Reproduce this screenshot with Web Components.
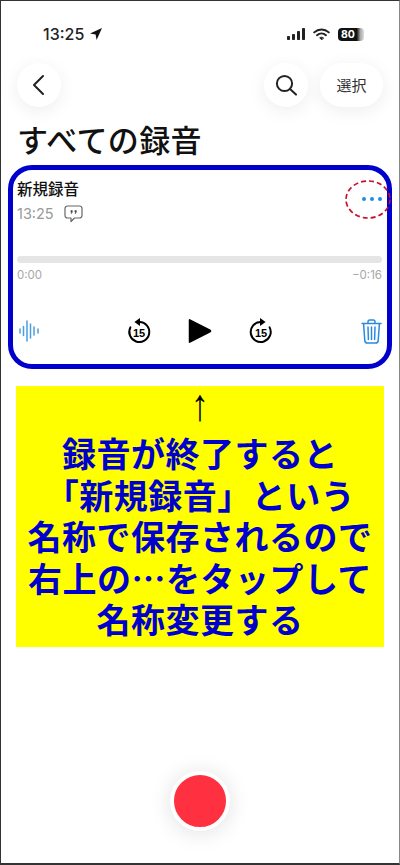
<!DOCTYPE html>
<html lang="ja">
<head>
<meta charset="utf-8">
<title>すべての録音</title>
<style>
    html, body { margin: 0; background: #fff; }
    body { font-family: "Inter", "Noto Sans CJK JP", sans-serif; }
</style>
</head>
<body>
<voice-screen>
    <status-bar slot="status"></status-bar>
    <nav-bar slot="nav"></nav-bar>
    <recording-card slot="card" name="新規録音" time="13:25" start="0:00" end="−0:16"></recording-card>
    <note-box slot="note">
        <div>録音が終了すると</div>
        <div>「新規録音」という</div>
        <div>名称で保存されるので</div>
        <div>右上の…をタップして</div>
        <div>名称変更する</div>
    </note-box>
    <record-button slot="record"></record-button>
</voice-screen>

<script>
const JP = '"Noto Sans CJK JP", sans-serif';

class VoiceScreen extends HTMLElement {
    constructor() {
        super();
        const shadow = this.attachShadow({ mode: 'open' });
        shadow.innerHTML = `
            <style>
                :host {
                    display: flex;
                    flex-direction: column;
                    box-sizing: border-box;
                    width: 400px;
                    height: 865px;
                    border: 1px solid #333;
                    border-bottom-width: 2px;
                    border-right-color: #888;
                    background: #fff;
                    overflow: hidden;
                }
                h1 {
                    margin: 12px 0 0 16px;
                    font: 500 31px/40px ${JP};
                    letter-spacing: .4px;
                    color: #111;
                }
                .card { display: block; margin: 6px 7px 0; }
                .note { display: block; margin: 17px 15px 0; }
                .record { display: flex; justify-content: center; margin-top: auto; padding-bottom: 32px; }
            </style>
            <slot name="status"></slot>
            <slot name="nav"></slot>
            <h1>すべての録音</h1>
            <div class="card"><slot name="card"></slot></div>
            <div class="note"><slot name="note"></slot></div>
            <div class="record"><slot name="record"></slot></div>
        `;
    }
}

class StatusBar extends HTMLElement {
    constructor() {
        super();
        const shadow = this.attachShadow({ mode: 'open' });
        shadow.innerHTML = `
            <style>
                :host {
                    display: flex;
                    align-items: center;
                    height: 20px;
                    padding: 23px 35px 0 42px;
                    font: 500 16px/20px "Inter", sans-serif;
                    color: #222;
                }
                .right { margin-left: auto; display: flex; align-items: center; gap: 8px; }
                svg { display: block; }
                .arrow { margin-left: 5px; }
                .batt {
                    width: 26px;
                    height: 13px;
                    border-radius: 4px;
                    background: linear-gradient(90deg, #111 0, #111 72%, #aaa 86%, #ddd 100%);
                    color: #fff;
                    font: 700 10.5px/13px "Inter", sans-serif;
                    text-align: left;
                    padding-left: 3px;
                    box-sizing: border-box;
                }
            </style>
            <span>13:25</span>
            <svg class="arrow" width="14" height="14" viewBox="0 0 14 14"><path d="M13 1 L1 6.6 L6.6 7.4 L7.6 13 Z" fill="#111"/></svg>
            <div class="right">
                <svg width="18" height="12" viewBox="0 0 18 12" fill="#222">
                    <rect x="0" y="8" width="3" height="4" rx=".8"/>
                    <rect x="5" y="6" width="3" height="6" rx=".8"/>
                    <rect x="10" y="3" width="3" height="9" rx=".8"/>
                    <rect x="15" y="0" width="3" height="12" rx=".8"/>
                </svg>
                <svg width="17" height="13" viewBox="0 0 17 13" fill="none" stroke="#222" stroke-width="1.9" stroke-linecap="round">
                    <path d="M1.2 4.4 C5.4 .6 11.6 .6 15.8 4.4"/>
                    <path d="M4 7.2 C6.6 5 10.4 5 13 7.2"/>
                    <path d="M8.5 11.6 L6.7 9.8 C7.8 9 9.2 9 10.3 9.8 Z" fill="#222" stroke-width="1"/>
                </svg>
                <div class="batt">80</div>
            </div>
        `;
    }
}

class RoundButton extends HTMLElement {
    constructor() {
        super();
        const shadow = this.attachShadow({ mode: 'open' });
        shadow.innerHTML = `
            <style>
                :host {
                    display: flex;
                    align-items: center;
                    justify-content: center;
                    box-sizing: border-box;
                    min-width: 44px;
                    height: 44px;
                    border-radius: 22px;
                    background: #fff;
                    box-shadow: 0 4px 18px rgba(0, 0, 0, .07);
                    font: 400 15px/20px ${JP};
                    color: #333;
                }
                :host([wide]) { width: 63px; }
            </style>
            <slot></slot>
        `;
    }
}

class NavBar extends HTMLElement {
    constructor() {
        super();
        const shadow = this.attachShadow({ mode: 'open' });
        shadow.innerHTML = `
            <style>
                :host {
                    display: flex;
                    align-items: center;
                    gap: 12px;
                    padding: 19px 16px 0 16px;
                }
                .back { margin-right: auto; }
                svg { display: block; }
            </style>
            <round-button class="back">
                <svg width="16" height="22" viewBox="0 0 16 22" fill="none" stroke="#222" stroke-width="2" stroke-linecap="round" stroke-linejoin="round"><path d="M12 2 L3 11 L12 20"/></svg>
            </round-button>
            <round-button>
                <svg width="24" height="24" viewBox="0 0 24 24" fill="none" stroke="#222" stroke-width="2" stroke-linecap="round"><circle cx="10.5" cy="10.5" r="7.6"/><path d="M16 16 L22 21.6"/></svg>
            </round-button>
            <round-button wide>選択</round-button>
        `;
    }
}

class SkipIcon extends HTMLElement {
    constructor() {
        super();
        const flip = this.hasAttribute('forward');
        const shadow = this.attachShadow({ mode: 'open' });
        shadow.innerHTML = `
            <style>
                :host { display: block; width: 24px; height: 26px; }
                svg { display: block; overflow: visible; }
                text { font: 700 11px "Liberation Sans", sans-serif; fill: #000; }
            </style>
            <svg width="24" height="26" viewBox="0 0 24 26" fill="none">
                <g transform="${flip ? 'translate(24 0) scale(-1 1)' : ''}">
                    <path d="M12.5 4 A10 10 0 1 1 3.4 9.4" stroke="#000" stroke-width="2" stroke-linecap="round"/>
                    <path d="M13 0 L7.4 4 L13 8 Z" fill="#000"/>
                </g>
                <text x="12" y="18.5" text-anchor="middle">15</text>
            </svg>
        `;
    }
}

class RecordingCard extends HTMLElement {
    constructor() {
        super();
        const shadow = this.attachShadow({ mode: 'open' });
        shadow.innerHTML = `
            <style>
                :host {
                    display: block;
                    position: relative;
                    box-sizing: border-box;
                    height: 204px;
                    border: 5px solid #0000cd;
                    border-radius: 24px;
                    padding: 8px 5px 0 4px;
                    background: #fff;
                }
                svg { display: block; }
                .name { font: 500 15.5px/20px ${JP}; color: #111; }
                .meta { display: flex; align-items: center; gap: 10px; height: 22px; margin-top: 5px; font: 400 14.5px/22px "Inter", sans-serif; color: #999; }
                .more { position: absolute; right: 5px; top: 27px; display: flex; gap: 4px; }
                .more i { width: 4px; height: 4px; border-radius: 50%; background: #1e8fe0; }
                .ring { position: absolute; right: -4px; top: 10px; }
                .track { height: 7px; border-radius: 4px; background: #e5e5e5; margin-top: 31px; }
                .times { display: flex; justify-content: space-between; margin-top: 5px; font: 400 11.5px/14px "Inter", sans-serif; color: #a8a8a8; }
                .controls { display: flex; align-items: center; justify-content: space-between; margin-top: 31px; height: 36px; }
                .mid { display: flex; align-items: center; gap: 37px; }
                .wave { margin-left: 2px; }
            </style>
            <div class="name">${this.getAttribute('name')}</div>
            <div class="meta">
                <span>${this.getAttribute('time')}</span>
                <svg width="19" height="18" viewBox="0 0 19 18" fill="none">
                    <path d="M3.5 1 H15.5 A2.5 2.5 0 0 1 18 3.5 V10.5 A2.5 2.5 0 0 1 15.5 13 H10.5 L7 16.5 V13 H3.5 A2.5 2.5 0 0 1 1 10.5 V3.5 A2.5 2.5 0 0 1 3.5 1 Z" stroke="#666" stroke-width="1.2" stroke-linejoin="round"/>
                    <path d="M6.6 5.2 h2 v2 l-1 1.5 h-.8 l.6 -1.5 h-.8 Z M10.6 5.2 h2 v2 l-1 1.5 h-.8 l.6 -1.5 h-.8 Z" fill="#444"/>
                </svg>
            </div>
            <div class="more"><i></i><i></i><i></i></div>
            <svg class="ring" width="46" height="39" viewBox="0 0 46 39" fill="none">
                <ellipse cx="23" cy="19.5" rx="22" ry="18.5" stroke="#c8102e" stroke-width="1.7" stroke-dasharray="5 3"/>
            </svg>
            <div class="track"></div>
            <div class="times"><span>${this.getAttribute('start')}</span><span>${this.getAttribute('end')}</span></div>
            <div class="controls">
                <svg class="wave" width="20" height="22" viewBox="0 0 20 22" fill="none" stroke="#4a9fe0" stroke-width="1.5" stroke-linecap="round">
                    <path d="M1 9 V13 M4.5 6.5 V15.5 M8 1 V21 M11.5 4 V18 M15 7 V15 M19 9 V13"/>
                </svg>
                <div class="mid">
                    <skip-icon></skip-icon>
                    <svg width="24" height="28" viewBox="0 0 26 28"><path d="M2.2 1.2 L24.6 12.6 Q26 14 24.6 15.4 L2.2 26.8 Q.8 27.4 .8 25.8 V2.2 Q.8 .6 2.2 1.2 Z" fill="#000"/></svg>
                    <skip-icon forward></skip-icon>
                </div>
                <svg width="21" height="25" viewBox="0 0 21 25" fill="none" stroke="#2a8ae0" stroke-width="1.5" stroke-linecap="round" stroke-linejoin="round">
                    <path d="M1 4.6 H20 M7 4.4 V2.8 Q7 1 8.8 1 H12.2 Q14 1 14 2.8 V4.4"/>
                    <path d="M2.6 5 L3.8 21.6 Q4 24 6.4 24 H14.6 Q17 24 17.2 21.6 L18.4 5"/>
                    <path d="M7 8 L7.4 20.5 M10.5 8 V20.5 M14 8 L13.6 20.5"/>
                </svg>
            </div>
        `;
    }
}

class NoteBox extends HTMLElement {
    constructor() {
        super();
        const shadow = this.attachShadow({ mode: 'open' });
        shadow.innerHTML = `
            <style>
                :host {
                    display: block;
                    box-sizing: border-box;
                    height: 261px;
                    background: #ffff00;
                    text-align: center;
                    color: #0000cd;
                    font: 700 34px/41.5px ${JP};
                    letter-spacing: .5px;
                }
                .up { display: flex; justify-content: center; padding-top: 4px; height: 46px; box-sizing: border-box; }
                .up span { display: block; font: 400 36px/31px "Liberation Sans", sans-serif; color: #000; letter-spacing: 0; transform: scaleY(1.25); }
            </style>
            <div class="up"><span>↑</span></div>
            <slot></slot>
        `;
    }
}

class RecordButton extends HTMLElement {
    constructor() {
        super();
        const shadow = this.attachShadow({ mode: 'open' });
        shadow.innerHTML = `
            <style>
                :host {
                    display: block;
                    box-sizing: border-box;
                    width: 60px;
                    height: 60px;
                    border: 4px solid #fff;
                    border-radius: 50%;
                    background: #ff3040;
                    box-shadow: 0 2px 22px rgba(0, 0, 0, .12);
                }
            </style>
        `;
    }
}

customElements.define('voice-screen', VoiceScreen);
customElements.define('status-bar', StatusBar);
customElements.define('round-button', RoundButton);
customElements.define('nav-bar', NavBar);
customElements.define('skip-icon', SkipIcon);
customElements.define('recording-card', RecordingCard);
customElements.define('note-box', NoteBox);
customElements.define('record-button', RecordButton);
</script>
</body>
</html>
